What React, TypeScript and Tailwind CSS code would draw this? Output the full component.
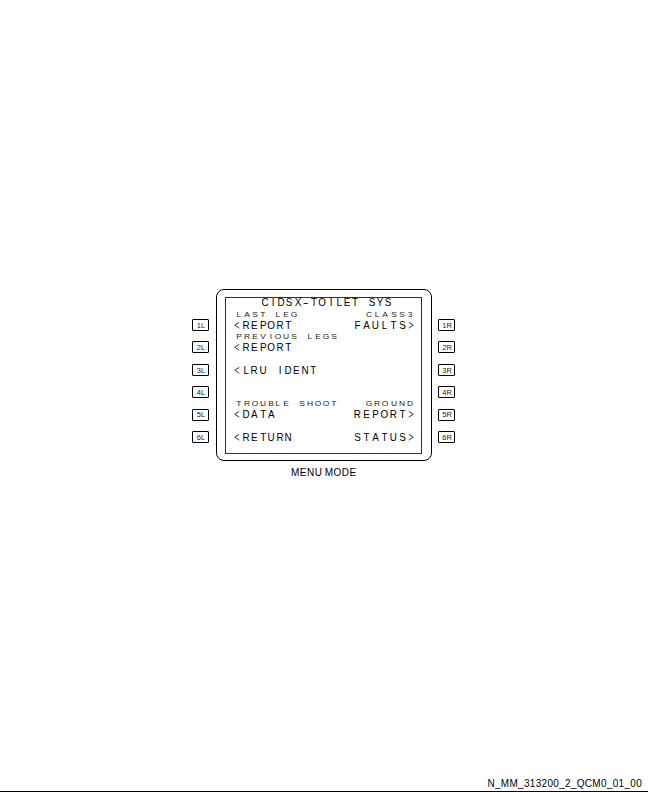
import React from "react";

function Cells({ text, cell }: { text: string; cell: string }) {
  return (
    <span className="flex">
      {text.split("").map((c, i) => (
        <span key={i} className={`flex shrink-0 justify-center whitespace-pre ${cell}`}>
          {c === "-" ? <span className="inline-block scale-x-[1.8]">-</span> : c}
        </span>
      ))}
    </span>
  );
}

function Chevron({ flip }: { flip?: boolean }) {
  return (
    <svg width="6" height="8" viewBox="0 0 6 8" className={flip ? "-scale-x-100" : ""} fill="none" stroke="#222" strokeWidth="0.9">
      <path d="M5.3 1.3 L0.7 4.2 L5.3 7.1" />
    </svg>
  );
}

function Small({ left, right }: { left?: string; right?: string }) {
  return (
    <div className="flex h-[10px] items-center justify-between pl-[9px] pr-[7px] text-[7.5px] leading-[10px] text-[#222]">
      {left ? <Cells text={left} cell="w-[7.9px] scale-x-[1.12]" /> : <span />}
      {right && <Cells text={right} cell="w-[8.15px] scale-x-[1.12]" />}
    </div>
  );
}

function Line({ left, right }: { left?: string; right?: string }) {
  return (
    <div className="flex h-3 items-center justify-between pl-2 pr-[7px] text-[10.5px] leading-[12px]">
      {left ? (
        <span className="flex items-center gap-[2px]">
          <Chevron />
          <Cells text={left} cell="w-[8.4px] scale-x-[.94]" />
        </span>
      ) : (
        <span />
      )}
      {right && (
        <span className="flex items-center gap-[1.5px]">
          <Cells text={right} cell="w-[8.9px] scale-x-[.94]" />
          <Chevron flip />
        </span>
      )}
    </div>
  );
}

function Keys({ side }: { side: string }) {
  return (
    <div className="mt-[30px] flex h-[124px] flex-col justify-between">
      {[1, 2, 3, 4, 5, 6].map((n) => (
        <div
          key={n}
          className="flex h-3 w-[17px] items-center justify-center rounded-[1px] border border-black pl-px pt-px text-[7.5px] leading-none text-[#222]"
        >
          {n}
          {side}
        </div>
      ))}
    </div>
  );
}

export default function App() {
  return (
    <div className="flex h-[792px] w-[648px] flex-col border-b border-black bg-white pt-[289px] font-['Liberation_Sans',Arial,sans-serif] text-black">
      <div className="ml-[192px] flex">
        <Keys side="L" />
        <div className="ml-[7px] mr-[6px] h-[172px] w-[216px] rounded-[8px] border border-black pl-2 pt-[7px]">
          <div className="h-[157px] w-[197px] border border-[#333]">
            <div className="-mt-px flex h-[13px] justify-center pl-[6px] text-[10.5px] leading-[11px]">
              <Cells text="CIDSX-TOILET SYS" cell="w-[8.25px] scale-x-[.94]" />
            </div>
            <Small left="LAST LEG" right="CLASS3" />
            <div className="-mt-px" />
            <Line left="REPORT" right="FAULTS" />
            <div className="pt-px" />
            <Small left="PREVIOUS LEGS" />
            <div className="-mt-px" />
            <Line left="REPORT" />
            <div className="h-[11px]" />
            <Line left="LRU IDENT" />
            <div className="h-[23px]" />
            <Small left="TROUBLE SHOOT" right="GROUND" />
            <div className="-mt-px" />
            <Line left="DATA" right="REPORT" />
            <div className="h-[11px]" />
            <Line left="RETURN" right="STATUS" />
          </div>
        </div>
        <Keys side="R" />
      </div>
      <div className="ml-[291px] mt-[6px] text-[10px] leading-[12px] tracking-[0.5px] [word-spacing:-1px]">MENU MODE</div>
      <div className="mb-[1px] mr-[6px] mt-auto text-right text-[10px] leading-[12px] tracking-[0.3px]">N_MM_313200_2_QCM0_01_00</div>
    </div>
  );
}
